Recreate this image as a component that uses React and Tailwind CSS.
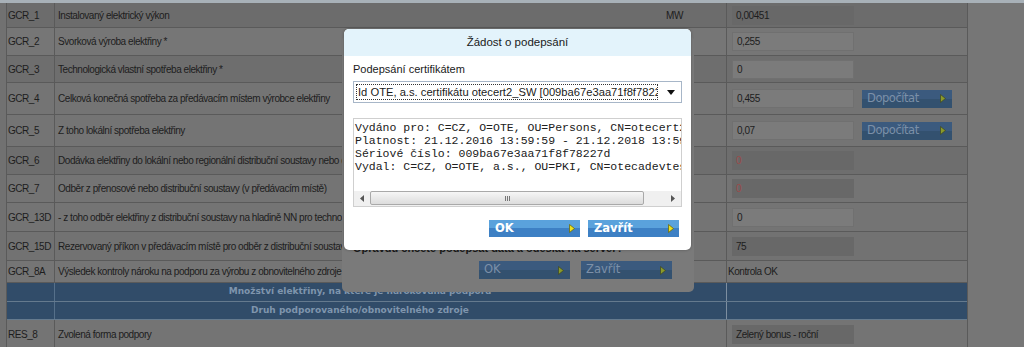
import React from "react"

const ROWS = [
  { code: "GCR_1", label: "Instalovaný elektrický výkon", unit: "MW", value: "0,00451", ro: true, h: 25, bg: "bg-[#6c6c6c]" },
  { code: "GCR_2", label: "Svorková výroba elektřiny *", value: "0,255", h: 28, bg: "bg-[#767676]" },
  { code: "GCR_3", label: "Technologická vlastní spotřeba elektřiny *", value: "0", h: 27, bg: "bg-[#6e6e6e]" },
  { code: "GCR_4", label: "Celková konečná spotřeba za předávacím místem výrobce elektřiny", value: "0,455", btn: true, h: 32, bg: "bg-[#747474]" },
  { code: "GCR_5", label: "Z toho lokální spotřeba elektřiny", value: "0,07", btn: true, h: 32, bg: "bg-[#747474]" },
  { code: "GCR_6", label: "Dodávka elektřiny do lokální nebo regionální distribuční soustavy nebo do přenosové soustavy", value: "0", ro: true, red: true, h: 28, bg: "bg-[#6e6e6e]" },
  { code: "GCR_7", label: "Odběr z přenosové nebo distribuční soustavy (v předávacím místě)", value: "0", ro: true, red: true, h: 28, bg: "bg-[#747474]" },
  { code: "GCR_13D", label: "- z toho odběr elektřiny z distribuční soustavy na hladině NN pro technologickou spotřebu", value: "0", h: 29, bg: "bg-[#747474]" },
  { code: "GCR_15D", label: "Rezervovaný příkon v předávacím místě pro odběr z distribuční soustavy", value: "75", ro: true, h: 29, bg: "bg-[#727272]" },
  { code: "GCR_8A", label: "Výsledek kontroly nároku na podporu za výrobu z obnovitelného zdroje", text: "Kontrola OK", h: 22, bg: "bg-[#757575]" },
]

function Arrow({ color = "#ece21e", stroke = "#6b6a10" }) {
  return (
    <svg width="6" height="9" viewBox="0 0 6 9" className="shrink-0">
      <polygon points="0.5,0.5 5.5,4.5 0.5,8.5" fill={color} stroke={stroke} strokeWidth="0.8" />
    </svg>
  )
}

function DimButton({ label, w = "w-[91px]" }) {
  return (
    <div className={`${w} h-[18px] flex items-center justify-between pl-[5px] pr-[6px] bg-[linear-gradient(#3b5a7e_0_50%,#33516f_50%_100%)] text-[#7c90a8] text-[11.5px] font-['DejaVu_Sans',sans-serif]`}>
      <span>{label}</span>
      <Arrow color="#8a9a2a" stroke="#3f4a2a" />
    </div>
  )
}

function BlueButton({ label }) {
  return (
    <div className="w-[91px] h-[17px] flex items-center justify-between pl-[6px] pr-[5px] bg-[linear-gradient(#5aa2dc_0_50%,#3d80c4_50%_100%)] text-white text-[11.5px] font-bold font-['DejaVu_Sans',sans-serif]">
      <span>{label}</span>
      <Arrow />
    </div>
  )
}

function Row({ r }) {
  return (
    <div className={`flex border-b border-[#5a5a5a] ${r.bg}`} style={{ height: r.h }}>
      <div className="w-[48px] shrink-0 border-r border-[#5a5a5a] pl-[1px] flex items-center whitespace-nowrap">{r.code}</div>
      <div className="w-[610px] shrink-0 pl-[3px] flex items-center overflow-hidden whitespace-nowrap">{r.label}</div>
      <div className="w-[62px] shrink-0 border-r border-[#5a5a5a] flex items-center pl-[1px]">{r.unit}</div>
      <div className="flex-1 flex items-center">
        {r.text ? (
          <span className="pl-[1px]">{r.text}</span>
        ) : (
          <>
            <div
              className={`ml-[5px] w-[122px] h-[19px] flex items-center pl-[4px] ${
                r.ro ? "bg-[#686868]" : "bg-[#7b7b7b] border border-[#707070]"
              } ${r.red ? "text-[#9c4a4a]" : ""}`}
            >
              {r.value}
            </div>
            {r.btn && (
              <div className="ml-[8px]">
                <DimButton label="Dopočítat" w="w-[90px]" />
              </div>
            )}
          </>
        )}
      </div>
    </div>
  )
}

function BlueRow({ h, label }) {
  return (
    <div className="flex bg-[#314c69] border-b border-[#657a8e] text-[#7f95ad] font-bold text-[9px] font-['DejaVu_Sans',sans-serif] tracking-normal" style={{ height: h }}>
      <div className="w-[48px] shrink-0 border-r border-[#56708a]" />
      <div className="w-[610px] shrink-0 flex items-center justify-center whitespace-nowrap">{label}</div>
      <div className="w-[62px] shrink-0 border-r border-[#7d8ea0]" />
      <div className="flex-1" />
    </div>
  )
}

export default function App() {
  return (
    <div className="relative w-[1024px] h-[347px] overflow-hidden bg-[#767676] text-[#1d1d1d] text-[10px] tracking-[-0.45px] font-['Liberation_Sans',Arial,sans-serif]">
      <div className="h-[3px] bg-[#a8b1b8]" />
      <div className="flex">
        <div className="w-[7px] shrink-0 bg-[#717171] border-r border-[#5a5a5a]" />
        <div className="w-[961px] shrink-0 border-r border-[#5a5a5a]">
          {ROWS.map((r) => (
            <Row key={r.code} r={r} />
          ))}
          <BlueRow h={19} label="Množství elektřiny, na které je nárokována podpora" />
          <BlueRow h={18} label="Druh podporovaného/obnovitelného zdroje" />
          <Row r={{ code: "RES_8", label: "Zvolená forma podpory", value: "Zelený bonus - roční", ro: true, h: 30, bg: "bg-[#747474]" }} />
        </div>
        <div className="flex-1 bg-[#767676]" />
      </div>

      {/* dimmed dialog behind */}
      <div className="absolute left-[342px] top-[36px] w-[352px] h-[256px] bg-[#7a7a7a] rounded-[5px] tracking-normal">
        <div className="absolute left-[11px] top-[206px] text-[11px] leading-[13px] font-bold text-[#1a1a1a] whitespace-nowrap">
          Opravdu chcete podepsat data a odeslat na server?
        </div>
        <div className="absolute left-[137px] top-[225px] flex gap-[11px]">
          <DimButton label="OK" />
          <DimButton label="Zavřít" />
        </div>
      </div>

      {/* signing dialog */}
      <div className="absolute left-[344px] top-[29px] w-[347px] h-[221px] bg-white rounded-[5px] overflow-hidden shadow-[0_0_3px_rgba(0,0,0,0.3)] text-[#1a1a1a] tracking-normal">
        <div className="h-[27px] bg-[#e3f3fb] flex items-center justify-center text-[11.5px]">Žádost o podepsání</div>
        <div className="px-[9px]">
          <div className="mt-[5px] h-[16px] text-[11px] leading-[16px]">Podepsání certifikátem</div>
          <div className="mt-[4px] h-[22px] border border-[#a7b6c8] flex items-center pl-[2px] pr-[6px]">
            <div className="flex-1 overflow-hidden whitespace-nowrap border border-dotted border-[#333] px-[1px] h-[16px] leading-[14px] text-[11.2px]">
              Id OTE, a.s. certifikátu otecert2_SW [009ba67e3aa71f8f78227d]
            </div>
            <svg width="8" height="5" viewBox="0 0 8 5" className="ml-[9px]">
              <polygon points="0,0 8,0 4,5" fill="#111" />
            </svg>
          </div>
          <div className="mt-[15px] h-[89px] border border-[#cfcfcf] flex flex-col">
            <div className="flex-1 overflow-hidden whitespace-nowrap pl-[1px] pt-[2px] font-['Liberation_Mono',monospace] text-[11.5px] leading-[13px] text-[#202020]">
              <div>Vydáno pro: C=CZ, O=OTE, OU=Persons, CN=otecert2_SW</div>
              <div>Platnost: 21.12.2016 13:59:59 - 21.12.2018 13:59:59</div>
              <div>Sériové číslo: 009ba67e3aa71f8f78227d</div>
              <div>Vydal: C=CZ, O=OTE, a.s., OU=PKI, CN=otecadevtest</div>
            </div>
            <div className="h-[15px] flex bg-[#f0f0f0]">
              <div className="w-[16px] flex items-center justify-center">
                <svg width="4" height="7" viewBox="0 0 4 7"><polygon points="4,0 0,3.5 4,7" fill="#555" /></svg>
              </div>
              <div className="w-[274px] h-[14px] rounded-[2px] border border-[#a9a9a9] bg-[linear-gradient(#f6f6f6,#dcdcdc)] flex items-center justify-center">
                <div className="flex gap-[1px]">
                  <div className="w-[1px] h-[5px] bg-[#777]" />
                  <div className="w-[1px] h-[5px] bg-[#777]" />
                  <div className="w-[1px] h-[5px] bg-[#777]" />
                </div>
              </div>
              <div className="flex-1 flex items-center justify-end pr-[6px]">
                <svg width="4" height="7" viewBox="0 0 4 7"><polygon points="0,0 4,3.5 0,7" fill="#555" /></svg>
              </div>
            </div>
          </div>
          <div className="mt-[13px] flex justify-end gap-[8px] pr-[3px]">
            <BlueButton label="OK" />
            <BlueButton label="Zavřít" />
          </div>
        </div>
      </div>
    </div>
  )
}
